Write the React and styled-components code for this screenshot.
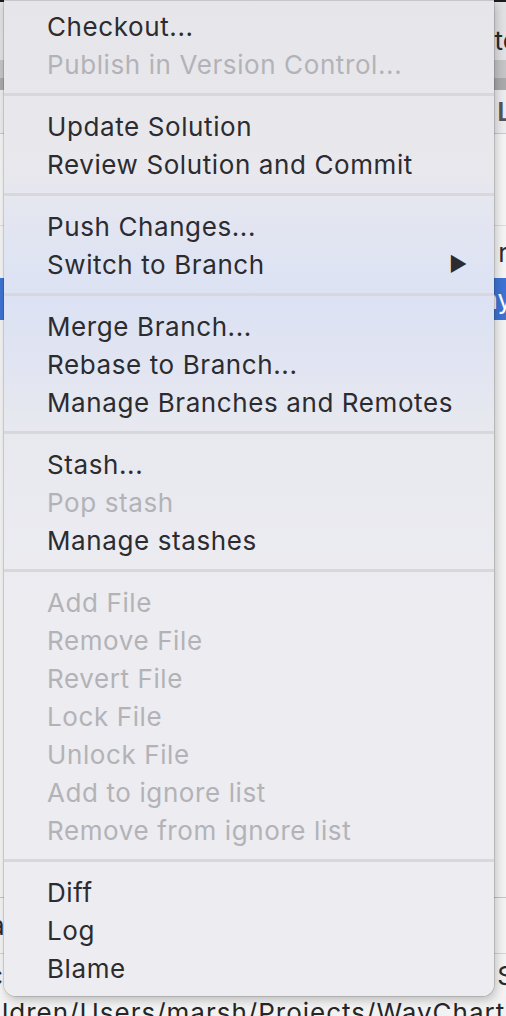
import React from "react";
import styled, { createGlobalStyle } from "styled-components";

const GlobalStyle = createGlobalStyle`
  html, body {
    margin: 0;
    padding: 0;
    width: 506px;
    height: 1016px;
    overflow: hidden;
    background: #ececec;
  }
`;

const Page = styled.div`
  position: relative;
  width: 506px;
  height: 1016px;
  overflow: hidden;
  font-family: Inter, "Liberation Sans", sans-serif;
`;

/* ---- window behind the menu ---- */

const Backdrop = styled.div`
  display: flex;
  flex-direction: column;
  height: 100%;
`;

const Band = styled.div`
  height: ${({ h }) => h}px;
  flex: ${({ grow }) => (grow ? 1 : "none")};
  background: ${({ bg }) => bg};
  border-bottom: ${({ line }) => (line ? `1px solid ${line}` : "none")};
  display: flex;
  align-items: ${({ align }) => align || "center"};
  justify-content: space-between;
  font-size: 26px;
  color: ${({ fg }) => fg || "#2a2a2a"};
  white-space: nowrap;
  overflow: hidden;
  box-sizing: border-box;
`;

const EdgeText = styled.span`
  margin-left: ${({ left }) => left || 0}px;
  margin-right: ${({ right }) => right || 0}px;
  margin-bottom: ${({ lift }) => lift || 0}px;
  font-weight: ${({ bold }) => (bold ? 600 : 400)};
`;

const PathLine = styled.div`
  height: 20px;
  background: #f2f2f2;
  font-size: 26px;
  color: #262626;
  white-space: nowrap;
  overflow: hidden;
  line-height: 34px;
  padding-left: 2px;
  letter-spacing: 1px;
`;

/* ---- context menu ---- */

const Menu = styled.div`
  position: absolute;
  left: 4px;
  top: 0;
  width: 490px;
  height: 996px;
  box-sizing: border-box;
  padding: 6px 0 9px;
  border-top: 1px solid #c6c6ca;
  border-radius: 0 0 12px 12px;
  background: linear-gradient(
    to bottom,
    #e6e6ea 0px,
    #e8e8ed 170px,
    #e1e5f2 240px,
    #dce2f4 300px,
    #e0e4f2 350px,
    #e8e9ef 430px,
    #ececf1 600px,
    #ececf1 100%
  );
  box-shadow: 0 0 0 1px rgba(0, 0, 0, 0.12), 2px 4px 10px rgba(0, 0, 0, 0.22);
  display: flex;
  flex-direction: column;
`;

const Item = styled.div`
  height: 38px;
  flex: none;
  display: flex;
  align-items: center;
  justify-content: space-between;
  padding: 0 26px 0 43px;
  font-size: 26px;
  letter-spacing: 0.6px;
  color: ${({ disabled }) => (disabled ? "#b3b3b7" : "#2c2c30")};
`;

const Separator = styled.div`
  height: 3px;
  flex: none;
  margin: 10px 0 11px;
  background: #d7d7dc;
`;

const Arrow = styled.span`
  font-size: 20px;
  color: #2c2c30;
  line-height: 1;
`;

const groups = [
  [["Checkout..."], ["Publish in Version Control...", true]],
  [["Update Solution"], ["Review Solution and Commit"]],
  [["Push Changes..."], ["Switch to Branch", false, true]],
  [["Merge Branch..."], ["Rebase to Branch..."], ["Manage Branches and Remotes"]],
  [["Stash..."], ["Pop stash", true], ["Manage stashes"]],
  [
    ["Add File", true],
    ["Remove File", true],
    ["Revert File", true],
    ["Lock File", true],
    ["Unlock File", true],
    ["Add to ignore list", true],
    ["Remove from ignore list", true],
  ],
  [["Diff"], ["Log"], ["Blame"]],
];

export default function App() {
  return (
    <Page>
      <GlobalStyle />
      <Backdrop>
        <Band h={2} bg="#1c1c1c" />
        <Band h={58} bg="#e1e1e4" align="flex-end">
          <span />
          <EdgeText right={-12} lift={4}>
            Write
          </EdgeText>
        </Band>
        <Band h={18} bg="#c4c4c7" />
        <Band h={12} bg="#a9a9ac" />
        <Band h={44} bg="#ececee" line="#c9c9cc" fg="#555">
          <span />
          <EdgeText right={-6} bold>
            L
          </EdgeText>
        </Band>
        <Band h={92} bg="#f4f4f4" line="#dcdcdc" />
        <Band h={52} bg="#f4f4f4">
          <span />
          <EdgeText right={-2}>r</EdgeText>
        </Band>
        <Band h={42} bg="#3d73d3" fg="#fff">
          <span />
          <EdgeText right={-6}>any</EdgeText>
        </Band>
        <Band grow bg="#f3f3f3" line="#c4c4c4" />
        <Band h={56} bg="#f3f3f3" line="#d4d4d4">
          <EdgeText left={-10}>a</EdgeText>
        </Band>
        <Band h={42} bg="#f3f3f3">
          <EdgeText left={-12}>c</EdgeText>
          <EdgeText right={-8}>S</EdgeText>
        </Band>
        <PathLine>ldren/Users/marsh/Projects/WayCharts/WayCharts</PathLine>
      </Backdrop>

      <Menu>
        {groups.map((group, gi) => (
          <React.Fragment key={gi}>
            {gi > 0 && <Separator />}
            {group.map(([label, disabled, submenu]) => (
              <Item key={label} disabled={disabled}>
                <span>{label}</span>
                {submenu && <Arrow>▶</Arrow>}
              </Item>
            ))}
          </React.Fragment>
        ))}
      </Menu>
    </Page>
  );
}
